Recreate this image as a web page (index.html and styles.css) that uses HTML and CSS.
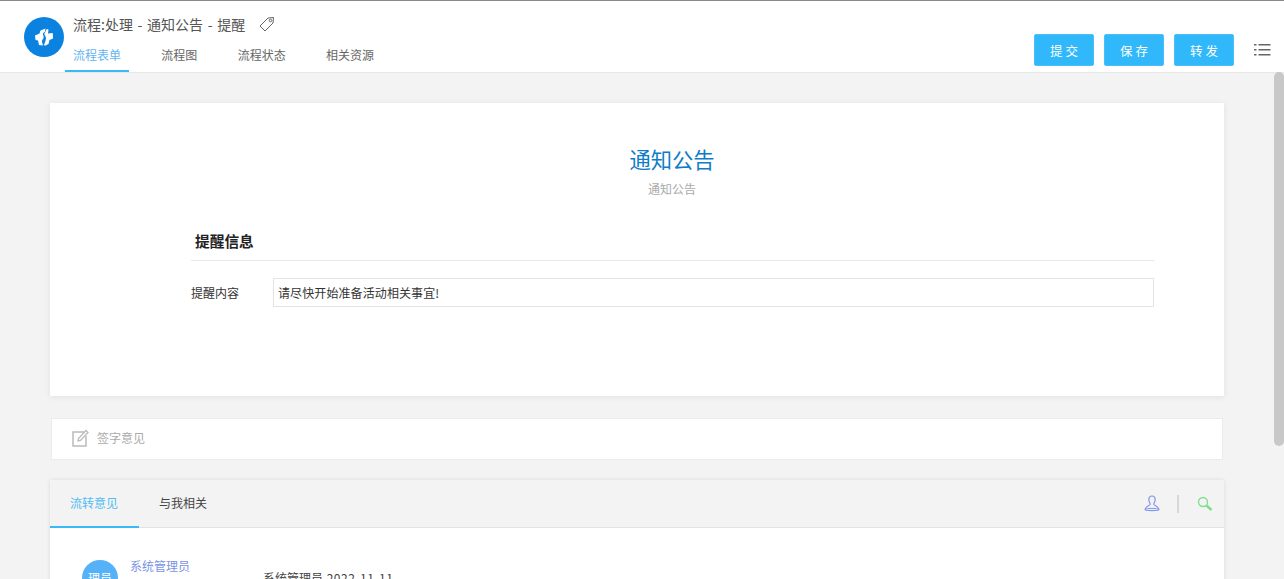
FILE: index.html
```html
<!DOCTYPE html>
<html lang="zh">
<head>
<meta charset="utf-8">
<title>流程:处理 - 通知公告 - 提醒</title>
<link rel="stylesheet" href="styles.css">
</head>
<body>
<header class="header">
  <div class="logo">
    <svg width="24" height="24" viewBox="0 0 24 24"><path d="M3 10.500 7.500 8.500 8.500 5.500 13.500 3.500 13 6.500 10.800 8.500 11.800 12.500 9.800 16 11 20.500 7 20 6 15.500 3.500 15Z" fill="#fff"/><path d="M14.800 4 16.500 4.500 16 8.500 20.800 8 21 13.500 17.500 15 16.500 19 13 20.800 12 20 13.500 16 14 12.500 12.200 9Z" fill="#fff"/></svg>
  </div>
  <div class="head-main">
    <div class="title-row">
      <span class="title">流程:处理 - 通知公告 - 提醒</span>
      <svg class="tag" width="16" height="16" viewBox="0 0 16 16"><path d="M1 10 9 2 14.500 1.500 14 7 6 15Z" fill="none" stroke="#666" stroke-width="1"/><circle cx="11.500" cy="4.500" r="1.300" fill="none" stroke="#666"/></svg>
    </div>
    <nav class="tabs">
      <a class="tab active">流程表单</a>
      <a class="tab">流程图</a>
      <a class="tab">流程状态</a>
      <a class="tab">相关资源</a>
    </nav>
  </div>
  <div class="actions">
    <button class="btn">提交</button>
    <button class="btn">保存</button>
    <button class="btn">转发</button>
    <svg class="menu" width="17" height="14" viewBox="0 0 17 14"><g fill="#666"><rect x="0" y="1" width="2.500" height="1.500"/><rect x="4.500" y="1" width="12" height="1.500"/><rect x="0" y="6" width="2.500" height="1.500"/><rect x="4.500" y="6" width="12" height="1.500"/><rect x="0" y="11" width="2.500" height="1.500"/><rect x="4.500" y="11" width="12" height="1.500"/></g></svg>
  </div>
</header>
<div class="scroll"><div class="thumb"></div></div>
<main class="content">
  <section class="form-card">
    <h1 class="form-title">通知公告</h1>
    <p class="form-sub">通知公告</p>
    <div class="form-body">
      <h2 class="section-title">提醒信息</h2>
      <div class="field">
        <label class="field-label">提醒内容</label>
        <div class="field-value">请尽快开始准备活动相关事宜!</div>
      </div>
    </div>
  </section>
  <section class="sign">
    <svg width="18" height="18" viewBox="0 0 18 18"><path d="M13 3H2V17H15V7" fill="none" stroke="#bbb" stroke-width="1.500"/><path d="M7 12 7.500 9.500 15 1.500 17 3.500 9.500 11.500Z" fill="none" stroke="#bbb" stroke-width="1.300"/></svg>
    <span>签字意见</span>
  </section>
  <section class="flow">
    <div class="flow-head">
      <a class="flow-tab active">流转意见</a>
      <a class="flow-tab">与我相关</a>
      <div class="flow-tools">
        <svg width="16" height="17" viewBox="0 0 16 17"><path d="M8 1C5.800 1 4.800 2.700 4.800 4.500 4.800 6.500 6 8 6.300 9 6.500 10.500 1 11.500 1 14.500 1 16 15 16 15 14.500 15 11.500 9.500 10.500 9.700 9 10 8 11.200 6.500 11.200 4.500 11.200 2.700 10.200 1 8 1Z" fill="none" stroke="#8095ee" stroke-width="1.200"/><path d="M1 14.500C4 13 12 13 15 14.500" fill="none" stroke="#8095ee"/></svg>
        <i class="sep"></i>
        <svg width="16" height="16" viewBox="0 0 16 16"><circle cx="6" cy="6" r="4.500" fill="none" stroke="#7ee08a" stroke-width="1.300"/><path d="M9.500 9.500 14.500 14" stroke="#7ee08a" stroke-width="2.500"/></svg>
      </div>
    </div>
    <div class="flow-body">
      <div class="avatar">理员</div>
      <a class="user">系统管理员</a>
      <span class="note">系统管理员 <span class="note-time">2022-11-11</span></span>
    </div>
  </section>
</main>
</body>
</html>
```
FILE: styles.css
```css
* { box-sizing: border-box; }
html, body { margin: 0; height: 579px; overflow: hidden; }
body {
  background: #f3f3f3;
  font-family: "Noto Sans CJK SC", "Liberation Sans", sans-serif;
  position: relative;
}
.header {
  height: 73px;
  background: #fff;
  border-top: 1px solid #8a8a8a;
  border-bottom: 1px solid #e8e8e8;
  display: flex;
  padding-left: 24px;
}
.logo {
  width: 40px; height: 40px;
  margin-top: 16px;
  border-radius: 50%;
  background: #0b82e0;
  display: flex; align-items: center; justify-content: center;
}
.head-main { margin-left: 1px; }
.title-row { height: 33px; padding: 13px 0 0 8px; display: flex; align-items: flex-start; }
.title { font-size: 14px; line-height: 21px; color: #555; word-spacing: 1.500px; }
.tag { margin: 2px 0 0 14px; }
.tabs { display: flex; height: 38px; }
.tab {
  font-size: 12px; color: #666; line-height: 33px; height: 38px;
  padding: 4px 8px 0; margin-right: 24.300px;
  border-bottom: 2px solid transparent;
}
.tab.active { color: #65b5f2; border-bottom-color: #38b9f8; }
.actions { margin-left: auto; display: flex; align-items: flex-start; padding: 33px 13px 0 0; gap: 10px; }
.btn {
  width: 60px; height: 32px; border: 1px solid #49c0fa; border-radius: 2px;
  background: #30b8fa; color: #fff; font: inherit; font-size: 12.500px; letter-spacing: 3px; padding: 0 0 0 3px;
}
.menu { margin: 9px 0 0 10px; }
.scroll { position: absolute; right: 0; top: 72px; width: 12px; height: 507px; }
.thumb { width: 10px; height: 374px; background: #c8c8c8; border-radius: 5px; margin-left: 2px; }
.content { padding: 30px 60px 0 50px; }
.form-card {
  height: 293px; background: #fff; box-shadow: 0 1px 6px rgba(0,0,0,.08);
  padding-top: 41px;
}
.form-title { margin: 0 0 0 70px; text-align: center; font-size: 21.300px; font-weight: 400; line-height: 30px; color: #0f7cc8; }
.form-sub { margin: 6px 0 0 70px; text-align: center; font-size: 12px; line-height: 18px; color: #aaa; }
.form-body { margin: 0 70px 0 141px; padding-top: 32px; }
.section-title { margin: 0; padding: 0 0 9px 4px; font-size: 14.700px; line-height: 21px; color: #222; font-weight: 700; border-bottom: 1px solid #e8e8e8; }
.field { display: flex; margin-top: 17px; align-items: center; }
.field-label { width: 82px; font-size: 12px; color: #333; }
.field-value { flex: 1; height: 29px; border: 1px solid #e4e4e4; padding-left: 4px; font-size: 12px; line-height: 28px; color: #333; letter-spacing: .1px; }
.sign {
  margin: 22px 1px 0; height: 42px; background: #fff; border: 1px solid #ebebeb;
  display: flex; align-items: center; padding: 0 0 3px 19px; gap: 8px;
  font-size: 12px; color: #aaa;
}
.flow { margin-top: 20px; box-shadow: 0 0 4px rgba(0,0,0,.1); height: 110px; }
.flow-head { height: 48px; background: #f3f3f3; border-bottom: 1px solid #e2e2e2; display: flex; }
.flow-tab { width: 89px; text-align: center; font-size: 12px; line-height: 46px; height: 48px; color: #444; border-bottom: 2px solid transparent; padding-right: 1px; }
.flow-tab.active { color: #4fbcf5; border-bottom-color: #38b9f8; }
.flow-tools { margin-left: auto; display: flex; align-items: center; padding-right: 11px; }
.sep { width: 2px; height: 18px; background: #d8d8d8; margin: 0 18px 0 17px; }
.flow-body { position: relative; height: 62px; background: #fff; }
.avatar {
  position: absolute; left: 32px; top: 32px; width: 36px; height: 36px; border-radius: 50%;
  background: #55b1f8; color: #fff; font-size: 12px; line-height: 36px; text-align: center;
}
.user { position: absolute; left: 80px; top: 29px; font-size: 12px; line-height: 18px; color: #7b93e4; }
.note { position: absolute; left: 213px; top: 41px; font-size: 12px; line-height: 18px; color: #444; }
.note-time { letter-spacing: .5px; margin-left: 1px; }
```
